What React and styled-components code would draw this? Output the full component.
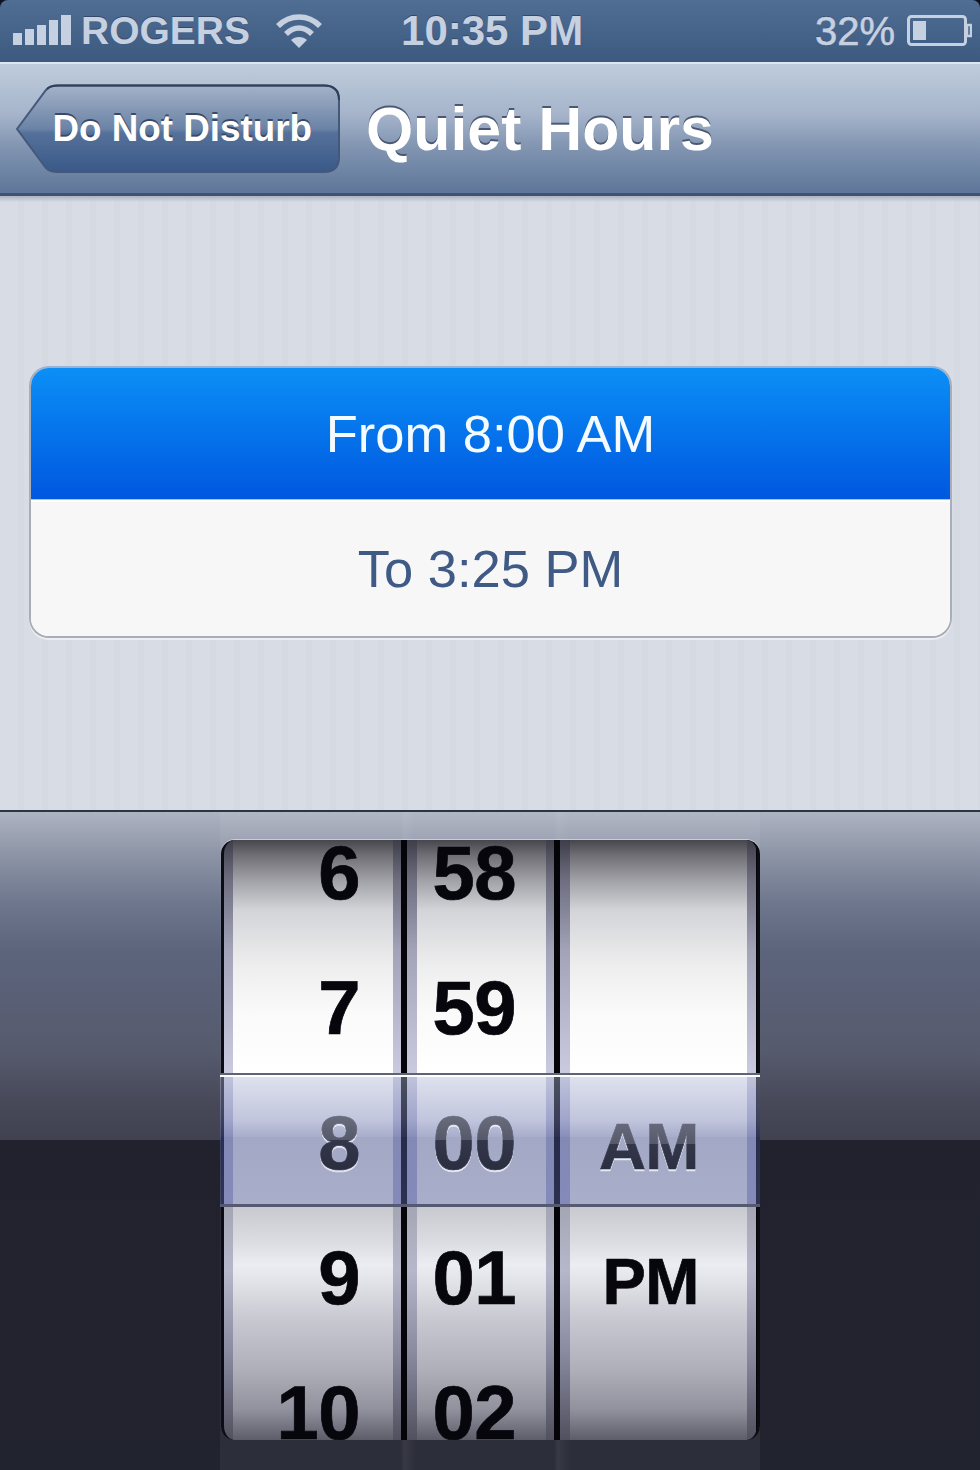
import React from "react";
import styled, { createGlobalStyle } from "styled-components";

const GlobalStyle = createGlobalStyle`
	html, body {
		margin: 0;
		padding: 0;
		background: #10131c;
	}
	* {
		box-sizing: border-box;
	}
`;

const Screen = styled.div`
	width: 980px;
	height: 1470px;
	overflow: hidden;
	font-family: "Liberation Sans", Arial, sans-serif;
`;

const StatusBar = styled.div`
	height: 62px;
	display: flex;
	align-items: center;
	padding: 0 8px 0 13px;
	border-radius: 8px 8px 0 0;
	background: linear-gradient(#506d93, #3c5980);
	color: #c5d0e0;
	font-weight: 700;
	text-shadow: 0 -1px 0 #34496a;
`;

const Carrier = styled.span`
	margin-left: 9px;
	font-size: 39px;
`;

const Clock = styled.span`
	margin-left: 78px;
	font-size: 42px;
`;

const Percent = styled.span`
	margin-left: auto;
	font-size: 40px;
	font-weight: 400;
	-webkit-text-stroke: 0.6px #c5d0e0;
`;

const SignalIcon = styled.svg`
	margin-bottom: 3px;
`;

const WifiIcon = styled.svg`
	margin-left: 25px;
`;

const BatteryIcon = styled.svg`
	margin-left: 12px;
`;

const NavBar = styled.div`
	height: 134px;
	display: flex;
	align-items: center;
	padding: 0 0 0 16px;
	border-top: 2px solid #dbe6f0;
	border-bottom: 3px solid #3e5373;
	background: linear-gradient(#bfccdc 0%, #a6b5cb 38%, #8497b3 62%, #5d7699 100%);
`;

const BackButton = styled.div`
	position: relative;
	width: 324px;
	height: 90px;
	padding: 0 28px 0 37px;
	display: flex;
	align-items: center;
	justify-content: flex-end;
	color: #fff;
	font-size: 36.8px;
	font-weight: 700;
	white-space: nowrap;
	text-shadow: 0 -2px 0 #3a4a66;
`;

const BackShape = styled.svg`
	position: absolute;
	left: 0;
	top: 0;
`;

const BackLabel = styled.span`
	position: relative;
`;

const Title = styled.h1`
	margin: 0 0 0 26px;
	color: #fff;
	font-size: 60.8px;
	font-weight: 700;
	white-space: nowrap;
	text-shadow: 0 -2px 0 #4a5873;
`;

const Content = styled.div`
	height: 614px;
	padding: 170px 28px 0 29px;
	background:
		linear-gradient(rgba(160, 168, 184, 0.8) 0, rgba(216, 221, 230, 0) 6px),
		repeating-linear-gradient(90deg, #d8dce5 0 18px, #d5d9e2 18px 24px);
`;

const Table = styled.div`
	height: 272px;
	display: flex;
	flex-direction: column;
	overflow: hidden;
	border: 2px solid #a9adb7;
	border-top-color: #98b3d4;
	border-radius: 20px;
	box-shadow: 0 2px 0 #eceef2;
	background: #f7f7f7;
`;

const Row = styled.div`
	height: ${(props) => (props.$selected ? "132px" : "136px")};
	display: flex;
	align-items: center;
	justify-content: center;
	font-size: 52.5px;
	color: ${(props) => (props.$selected ? "#f4fbff" : "#3f5a85")};
	background: ${(props) =>
		props.$selected ? "linear-gradient(#0b8ff6, #0057e0)" : "#f7f7f7"};
	border-bottom: ${(props) => (props.$selected ? "1px solid #a6c4ec" : "none")};
	box-shadow: ${(props) => (props.$selected ? "none" : "inset 0 2px 0 #fff")};
`;

const PickerArea = styled.div`
	height: 660px;
	padding: 0 0 0 220px;
	border-top: 2px solid #2b3546;
	background: linear-gradient(
		#adb3c1 0,
		#8f96a8 40px,
		#6f778e 90px,
		#5c647c 140px,
		#565a6d 240px,
		#474959 290px,
		#404252 328px,
		#21222e 328px,
		#21232f 100%
	);
`;

const PickerFrame = styled.div`
	width: 540px;
	height: 658px;
	padding: 28px 0 0 1px;
	background: linear-gradient(
		90deg,
		rgba(255, 255, 255, 0.05) 0,
		rgba(255, 255, 255, 0.05) 181px,
		rgba(255, 255, 255, 0.1) 184px,
		rgba(255, 255, 255, 0.05) 195px,
		rgba(255, 255, 255, 0.05) 334px,
		rgba(255, 255, 255, 0.1) 338px,
		rgba(255, 255, 255, 0.05) 350px,
		rgba(255, 255, 255, 0.05) 100%
	);
`;

const Picker = styled.div`
	position: relative;
	width: 539px;
	height: 600px;
`;

const Wheels = styled.div`
	height: 600px;
	display: flex;
	gap: 6px;
	overflow: hidden;
	background: #050509;
	border: solid #0b0c14;
	border-width: 0 3px;
	border-radius: 14px;
	box-shadow: 0 -1px 0 rgba(255, 255, 255, 0.45);
`;

const Wheel = styled.div`
	flex: 0 0 ${(props) => props.$width}px;
	padding: 0 ${(props) => props.$right}px 0 ${(props) => props.$left}px;
	background: linear-gradient(
		#3e3e4a 0,
		#6e6e80 40px,
		#a2a3b8 110px,
		#bfc0d6 200px,
		#c9cadf 232px,
		#b4b8de 367px,
		#a5a6b4 367px,
		#b6b7ca 430px,
		#85869b 520px,
		#50505e 600px
	);
`;

const Face = styled.div`
	height: 600px;
	padding-top: ${(props) => props.$drop}px;
	display: flex;
	flex-direction: column;
	justify-content: center;
	overflow: hidden;
	background: linear-gradient(
		#47464c 0,
		#6e6e74 15px,
		#a0a1a6 40px,
		#d3d4d8 70px,
		#eeeeef 127px,
		#fafafa 173px,
		#ffffff 232px,
		#ffffff 366px,
		#c9cad0 367px,
		#dadbe1 400px,
		#ecedf1 425px,
		#e0e1e6 445px,
		#c7c8d0 480px,
		#aeafb8 530px,
		#90919c 570px,
		#5c5d68 600px
	);
`;

const Cell = styled.div`
	position: relative;
	flex: 0 0 135px;
	height: 135px;
	line-height: 135px;
	text-align: right;
	padding-right: ${(props) => props.$inset}px;
	font-size: ${(props) => props.$size}px;
	font-weight: 700;
	letter-spacing: -0.5px;
	color: #06060c;
	-webkit-text-stroke: 0.7px currentColor;
	${(props) =>
		props.$selected &&
		`
		z-index: 2;
		color: transparent;
		-webkit-text-stroke: 0.7px transparent;
		background: linear-gradient(#6b6f80 28%, #565969 48%, #34374a 48%, #2a2d3e 72%);
		-webkit-background-clip: text;
		background-clip: text;
		filter: drop-shadow(0 2px 0 #e6e8f4);
	`}
`;

const SelectionBar = styled.div`
	position: absolute;
	z-index: 1;
	top: 233px;
	left: -1px;
	right: 0;
	height: 134px;
	border-top: 2px solid #5f6376;
	border-bottom: 3px solid #555a72;
	box-shadow: inset 0 2px 0 #fff;
	background: linear-gradient(
		rgba(180, 188, 215, 0.42) 0,
		rgba(120, 128, 180, 0.46) 35%,
		rgba(81, 91, 151, 0.5) 48%,
		rgba(71, 81, 139, 0.5) 48%,
		rgba(83, 93, 151, 0.5) 100%
	);
`;

const wheels = [
	{ width: 177, left: 9, right: 8, inset: 33, size: 76, drop: 4, items: ["6", "7", "8", "9", "10"] },
	{ width: 147, left: 10, right: 8, inset: 30, size: 76, drop: 4, items: ["58", "59", "00", "01", "02"] },
	{ width: 196, left: 10, right: 9, inset: 48, size: 65, drop: 12, items: ["", "", "AM", "PM", ""] },
];

const SignalBars = () => (
	<SignalIcon width="59" height="32" viewBox="0 0 59 32" fill="#c5d0e0">
		<rect x="0" y="19" width="9" height="12" />
		<rect x="12" y="15" width="9" height="16" />
		<rect x="24" y="11" width="9" height="20" />
		<rect x="36" y="6" width="9" height="25" />
		<rect x="48" y="1" width="10" height="30" />
	</SignalIcon>
);

const Wifi = () => (
	<WifiIcon width="48" height="36" viewBox="0 0 48 36" fill="none" stroke="#c5d0e0" strokeWidth="5.5">
		<path d="M3 13 C15 1 33 1 45 13" />
		<path d="M11 21 C19 13 29 13 37 21" />
		<path d="M24 35 L16 27 C20 23 28 23 32 27 Z" fill="#c5d0e0" stroke="none" />
	</WifiIcon>
);

const Battery = () => (
	<BatteryIcon width="65" height="32" viewBox="0 0 65 32" fill="none">
		<rect x="1.5" y="1.5" width="57" height="28" rx="3" stroke="#c5d0e0" strokeWidth="3" />
		<rect x="6" y="6" width="13" height="19" fill="#c5d0e0" />
		<path d="M60 10 H64 V21 H60 Z" fill="none" stroke="#c5d0e0" strokeWidth="2.5" />
	</BatteryIcon>
);

const BackOutline = () => (
	<BackShape width="324" height="90" viewBox="0 0 324 90">
		<defs>
			<linearGradient id="backFill" x1="0" y1="0" x2="0" y2="1">
				<stop offset="0" stopColor="#a3b2c8" />
				<stop offset="0.5" stopColor="#6b83a6" />
				<stop offset="0.55" stopColor="#55719a" />
				<stop offset="1" stopColor="#3a5988" />
			</linearGradient>
		</defs>
		<path
			d="M1 45 L30 6 Q34 1.5 42 1.5 H308 Q323 1.5 323 16 V73 Q323 88 308 88 H42 Q34 88 30 84 Z"
			fill="url(#backFill)"
			stroke="#44587a"
			strokeWidth="2"
		/>
		<path d="M31 5 Q34 1.5 42 1.5 H308 Q323 1.5 323 16" fill="none" stroke="#323f58" strokeWidth="2" />
	</BackShape>
);

const App = () => {
	return (
		<Screen>
			<GlobalStyle />
			<StatusBar>
				<SignalBars />
				<Carrier>ROGERS</Carrier>
				<Wifi />
				<Clock>10:35 PM</Clock>
				<Percent>32%</Percent>
				<Battery />
			</StatusBar>
			<NavBar>
				<BackButton>
					<BackOutline />
					<BackLabel>Do Not Disturb</BackLabel>
				</BackButton>
				<Title>Quiet Hours</Title>
			</NavBar>
			<Content>
				<Table>
					<Row $selected>From 8:00 AM</Row>
					<Row>To 3:25 PM</Row>
				</Table>
			</Content>
			<PickerArea>
				<PickerFrame>
					<Picker>
						<Wheels>
							{wheels.map((wheel, index) => (
								<Wheel key={index} $width={wheel.width} $left={wheel.left} $right={wheel.right}>
									<Face $drop={wheel.drop}>
										{wheel.items.map((item, row) => (
											<Cell key={row} $inset={wheel.inset} $size={wheel.size} $selected={row === 2}>
												{item}
											</Cell>
										))}
									</Face>
								</Wheel>
							))}
						</Wheels>
						<SelectionBar />
					</Picker>
				</PickerFrame>
			</PickerArea>
		</Screen>
	);
};

export default App;
